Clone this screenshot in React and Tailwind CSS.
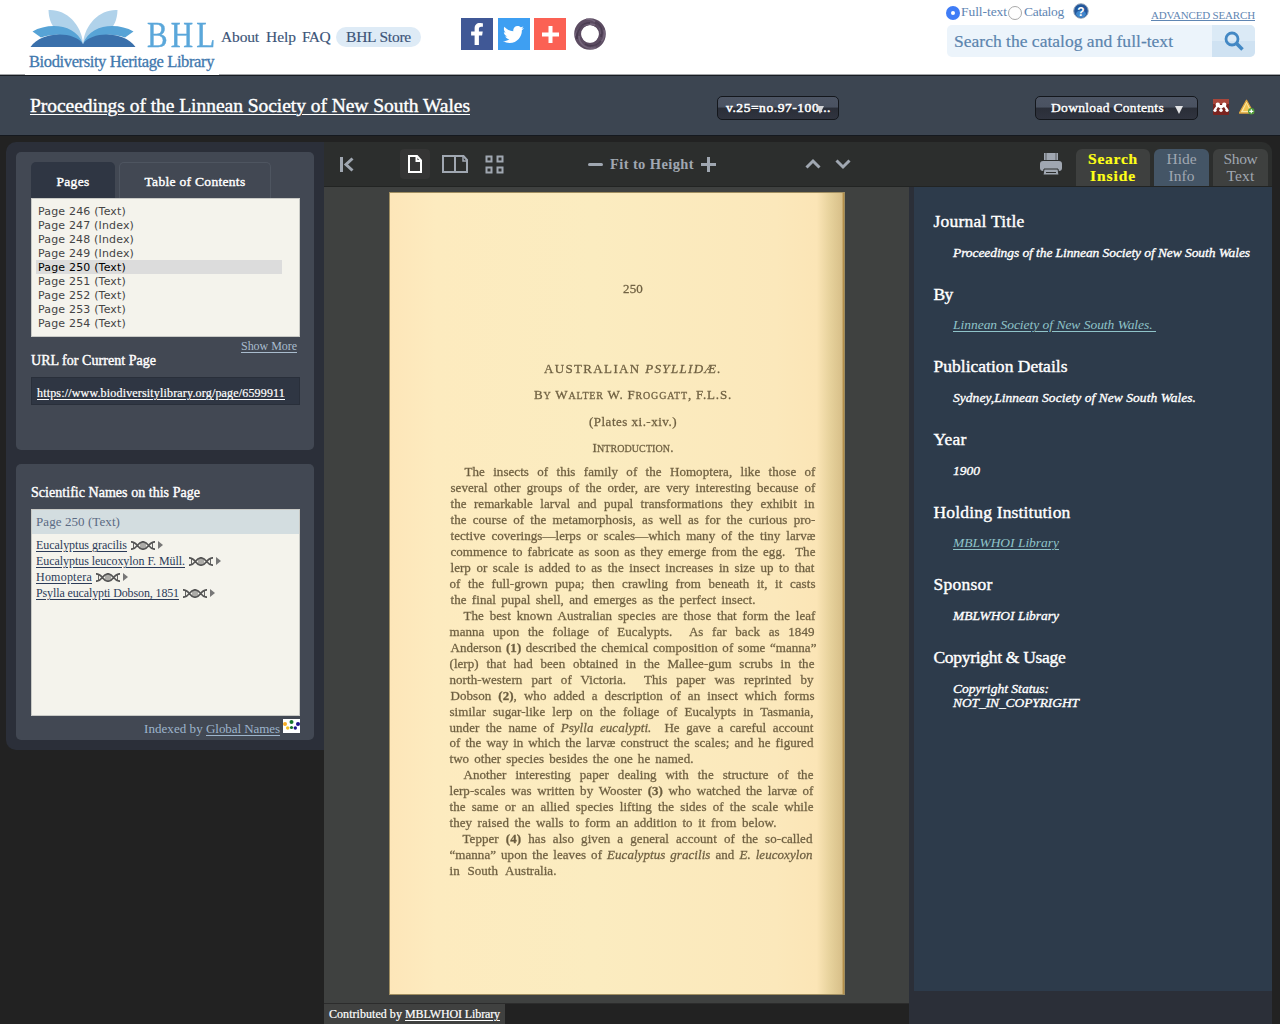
import React, { useLayoutEffect, useRef } from "react";
import { FaFacebookF, FaTwitter } from "react-icons/fa";

/* Single-line text tracked out (or in) so that it spans exactly w pixels. */
function T({ w, words = false, className = "", children }) {
  const ref = useRef(null);
  useLayoutEffect(() => {
    const el = ref.current;
    el.style.letterSpacing = words ? "0.05px" : "0px";
    el.style.wordSpacing = "0px";
    const natural = el.getBoundingClientRect().width;
    const text = el.textContent;
    if (words) {
      el.style.wordSpacing = (w - natural) / Math.max(1, text.split(/[ \u00a0]/).length - 1) + "px";
    } else {
      el.style.letterSpacing = (w - natural) / text.length + "px";
    }
  }, [w, words]);
  return (
    <span ref={ref} className={"inline-block whitespace-pre " + className}>
      {children}
    </span>
  );
}

function Logo() {
  return (
    <div className="z-10 ml-[25px] h-[75px] w-[194px] shrink-0 bg-white pt-[9px]">
      <div className="flex h-[40px] pl-[5px]">
        <svg width="108" height="38" viewBox="0 0 108 38" className="shrink-0">
          <path d="M18.500 1C36 0 51 15 53 34 31 29 19 20 18.500 1z" fill="#b0d2ea" />
          <path d="M87.500 1C70 0 55 15 53 34c22-5 34-14 34.500-33z" fill="#b0d2ea" />
          <path d="M2.500 22.500c16-9 43-8 50.500 12.500C41 26 27 23 11 28.500z" fill="#57a3d6" />
          <path d="M103.500 22.500c-16-9-43-8-50.500 12.500 12-9 26-12 42-6.500z" fill="#57a3d6" />
          <path d="M.5 38c11-16 44-16 52.500-3 8.500-13 41.500-13 52.500 3z" fill="#3a70ab" />
        </svg>
        <div className="ml-[9px] mt-[8px] h-[32px] w-[69px] text-[36px] leading-[36px] text-[#5aa7da]">
          <span className="inline-block origin-left scale-x-[0.86] [-webkit-text-stroke:0.4px_#5aa7da]">
            <T w={73}>BHL</T>
          </span>
        </div>
      </div>
      <div className="ml-[4px] mt-[3px] h-5 text-[16.5px] leading-5 text-[#3f78ae] [-webkit-text-stroke:0.3px_#3f78ae]">
        <T w={185}>Biodiversity Heritage Library</T>
      </div>
    </div>
  );
}

function RingIcon() {
  return (
    <svg width="32" height="32" viewBox="0 0 32 32">
      <circle cx="16" cy="16" r="12.3" fill="none" stroke="#5c4c62" strokeWidth="7" />
      <g fill="none" stroke="#897b90" strokeWidth="1.5" opacity=".55">
        <path d="M1 18C4 8 12 4 21 7" />
        <path d="M12 1c10 0 15 7 15 15" />
        <path d="M30 12c2 10-5 16-13 17" />
        <path d="M22 30C12 32 5 26 5 18" />
      </g>
      <g fill="none" stroke="#3d3045" strokeWidth="2" opacity=".6">
        <path d="M3 21C2 12 8 5 16 5" />
        <path d="M21 4c6 3 8 9 6 15" />
        <path d="M27 23c-4 6-11 6-16 3" />
      </g>
      <circle cx="16" cy="16" r="8.6" fill="#fff" />
    </svg>
  );
}

function Header() {
  return (
    <header className="flex h-[76px] border-b border-[#171c22] bg-[linear-gradient(#fff_74px,#a3a5a8_74px)]">
      <Logo />
      <nav className="ml-[2px] mt-[27px] flex h-5 w-[240px] items-center text-[15.5px] leading-5 text-[#3c5478] [-webkit-text-stroke:0.15px_#3c5478]">
        <T w={38}>About</T>
        <T w={30} className="ml-[7px]">Help</T>
        <T w={28} className="ml-[6px]">FAQ</T>
        <span className="ml-[6px] flex h-[20px] w-[85px] items-center justify-center rounded-full bg-[#deebf6]">
          <T w={65}>BHL Store</T>
        </span>
      </nav>
      <div className="mt-[18px] flex gap-[4.5px]">
        <span className="flex h-8 w-8 items-end justify-center bg-[#405896] text-white">
          <FaFacebookF size={22} className="mb-[5px]" />
        </span>
        <span className="flex h-8 w-8 items-center justify-center bg-[#3e9ff2] text-white">
          <FaTwitter size={21} />
        </span>
        <span className="flex h-8 w-8 items-center justify-center bg-[#fb6154]">
          <svg width="17" height="17" viewBox="0 0 17 17" stroke="#fff" strokeWidth="4">
            <path d="M8.500 0v17M0 8.500h17" />
          </svg>
        </span>
        <span className="ml-[3px]">
          <RingIcon />
        </span>
      </div>
      <div className="ml-auto mr-[25px] w-[309px]">
        <div className="flex h-[25px] items-start text-[13.5px] leading-[16px] text-[#5f86b3]">
          <span className="mt-[6px] flex h-[14px] w-[14px] items-center justify-center rounded-full bg-[#3f7cf6]">
            <i className="h-[4px] w-[4px] rounded-full bg-white" />
          </span>
          <T w={46} className="ml-px mt-[4px]">Full-text</T>
          <span className="ml-px mt-[6px] h-[14px] w-[14px] rounded-full border border-[#a9a9a9] bg-white" />
          <T w={40} className="ml-[2px] mt-[4px]">Catalog</T>
          <svg width="16" height="16" viewBox="0 0 16 16" className="ml-[9px] mt-[3px]">
            <circle cx="8" cy="8" r="7.300" fill="#22579c" stroke="#9aa9bb" strokeWidth="1" />
            <ellipse cx="8" cy="11" rx="5" ry="3.500" fill="#3f87cc" />
            <text x="8" y="12.500" textAnchor="middle" fill="#fff" fontSize="12" fontWeight="bold" fontFamily="Liberation Sans, sans-serif">?</text>
          </svg>
          <span className="ml-auto mt-[9px] h-[12px] border-b border-[#5f86b3] text-[11px] leading-[13px]">
            <T w={104}>ADVANCED SEARCH</T>
          </span>
        </div>
        <div className="ml-px flex h-8 w-[308px] overflow-hidden rounded-[5px] bg-[#ecf4fb]">
          <div className="flex-1 pl-[7px] text-[17.5px] leading-[33px] text-[#5b84ae] [-webkit-text-stroke:0.2px_#5b84ae]">
            <T w={219}>Search the catalog and full-text</T>
          </div>
          <div className="flex w-[43px] items-center justify-center bg-[linear-gradient(#dbeaf6_50%,#cfe2f2_50%)]">
            <svg width="20" height="20" viewBox="0 0 20 20" fill="none" stroke="#4388c4" className="ml-px">
              <circle cx="8" cy="8" r="6" strokeWidth="2.800" />
              <path d="M12.300 12.300L18.500 18.500" strokeWidth="3.600" />
            </svg>
          </div>
        </div>
      </div>
    </header>
  );
}

function TitleBar() {
  return (
    <div className="flex h-[60px] items-start border-b border-[#15191f] bg-[#3c4551] text-white">
      <div className="ml-[30px] mt-[19px] h-[21px] w-[440px] text-[19.5px] leading-[22px] [-webkit-text-stroke:0.4px_#fff]">
        <T w={440} className="underline decoration-1 underline-offset-2">Proceedings of the Linnean Society of New South Wales</T>
      </div>
      <button className="relative ml-[247px] mt-[20px] h-[24px] w-[122px] rounded-[5px] border border-[#14171c] bg-[linear-gradient(#4d5564_0,#4a5261_46%,#2a2e38_50%,#30343f_100%)] pl-[8px] text-left text-[13.5px] leading-[20px] [-webkit-text-stroke:0.5px_#fff]">
        <T w={105}>v.25=no.97-100...</T>
        <svg width="8" height="8" viewBox="0 0 8 8" className="absolute left-[98px] top-[9px]">
          <path d="M0 0h8L4 8z" fill="#d5d6d8" />
        </svg>
      </button>
      <button className="ml-[196px] mt-[20px] flex h-[24px] w-[163px] items-center rounded-[5px] border border-[#14171c] bg-[linear-gradient(#4d5564_0,#4a5261_46%,#2a2e38_50%,#30343f_100%)] pl-[15px] text-[13.5px] leading-[22px] [-webkit-text-stroke:0.4px_#fff]">
        <T w={113}>Download Contents</T>
        <svg width="8" height="8" viewBox="0 0 8 8" className="ml-[11px] mt-[3px]">
          <path d="M0 0h8L4 8z" fill="#e3e4e6" />
        </svg>
      </button>
      <svg width="16" height="16" viewBox="0 0 16 16" className="ml-[15px] mt-[23px]">
        <rect width="16" height="16" rx="1" fill="#7b2420" />
        <path d="M0 0h16v5H0z" fill="#a8463b" />
        <g fill="#fff">
          <circle cx="4.800" cy="5.800" r="2.200" />
          <circle cx="11.200" cy="5.800" r="2.200" />
          <circle cx="2" cy="11.300" r="1.600" />
          <circle cx="8" cy="11.300" r="1.700" />
          <circle cx="14" cy="11.300" r="1.600" />
          <path d="M1 10l3-4h8l3 4-2 1-2-3-3 2-3-2-2 3z" />
        </g>
      </svg>
      <svg width="16" height="16" viewBox="0 0 16 16" className="ml-[10px] mt-[23px]">
        <path d="M7.500 1.200L14.500 14h-14z" fill="#fae9a6" stroke="#e0a53c" strokeWidth="1.300" strokeLinejoin="round" />
        <path d="M7.500 4l3.500 8H4z" fill="#f1c453" />
        <circle cx="12.300" cy="12.300" r="3.200" fill="#4c9a38" />
        <path d="M12.300 10.300v4M10.300 12.300h4" stroke="#fff" strokeWidth="1.200" />
      </svg>
    </div>
  );
}

const pages = [
  ["246", "Text", 88], ["247", "Index", 96], ["248", "Index", 96], ["249", "Index", 96], ["250", "Text", 88],
  ["251", "Text", 88], ["252", "Text", 88], ["253", "Text", 88], ["254", "Text", 88],
];

const names = [
  ["Eucalyptus gracilis", 91],
  ["Eucalyptus leucoxylon F. Müll.", 149],
  ["Homoptera", 56],
  ["Psylla eucalypti Dobson, 1851", 143],
];

function Dna() {
  return (
    <svg width="24" height="9" viewBox="0 0 24 9" fill="none" stroke="#555" className="ml-[4px]">
      <path d="M0 .8C7 .8 6 8.200 12 8.200S17 .8 24 .8M0 8.200C7 8.200 6 .8 12 .8s5 7.400 12 7.400" strokeWidth="1.700" />
      <path d="M2.500 1.500v6M10 1.500v6M12 1.500v6M14 1.500v6M21.500 1.500v6" strokeWidth=".9" />
    </svg>
  );
}

function Sidebar() {
  return (
    <aside className="h-[608px] w-[318px] rounded-l-[10px] bg-[#2b2f39] px-[10px] pt-[10px]">
      <section className="h-[298px] w-[298px] rounded-[5px] bg-[#424853] px-[15px] pt-[10px]">
        <div className="flex h-9 text-[13.5px] leading-[39px] text-white [-webkit-text-stroke:0.4px_#fff]">
          <div className="w-[84px] rounded-t-[5px] bg-[#2f3643] text-center">
            <T w={33}>Pages</T>
          </div>
          <div className="ml-[4px] w-[152px] rounded-t-[5px] border border-b-0 border-[#4e5560] text-center leading-[37px]">
            <T w={101}>Table of Contents</T>
          </div>
        </div>
        <ul className="h-[139px] w-[269px] border border-[#c9cac6] bg-[#f4f3ec] pl-[4px] pt-[5px] font-['DejaVu_Sans',sans-serif] text-[11px] leading-[15px] text-[#444]">
          {pages.map(([n, kind, w]) => (
            <li key={n} className={n === "250" ? "h-[14px] w-[246px] bg-[#dcdcdc] pl-[2px] text-black" : "h-[14px] pl-[2px]"}>
              <T w={w}>{`Page ${n} (${kind})`}</T>
            </li>
          ))}
        </ul>
        <div className="mr-[2px] mt-[2px] h-[14px] text-right text-[12px] leading-[14px] text-[#a9bccd]">
          <T w={56} className="underline underline-offset-2">Show More</T>
        </div>
        <div className="h-[16px] text-[14px] leading-[16px] text-white [-webkit-text-stroke:0.4px_#fff]">
          <T w={125}>URL for Current Page</T>
        </div>
        <div className="mt-[8px] h-[28px] w-[269px] border border-[#292f3a] bg-[#2f3643] pl-[5px] text-[12px] leading-[30px] text-white [-webkit-text-stroke:0.2px_#fff]">
          <T w={248} className="underline underline-offset-2">https://www.biodiversitylibrary.org/page/6599911</T>
        </div>
      </section>
      <section className="mt-[14px] h-[276px] w-[298px] rounded-[5px] bg-[#424853] px-[15px] pt-[20px]">
        <div className="h-[25px] text-[14px] leading-[17px] text-white [-webkit-text-stroke:0.4px_#fff]">
          <T w={169}>Scientific Names on this Page</T>
        </div>
        <div className="h-[207px] w-[269px] border border-[#c9cac6] bg-[#f4f3ec] text-[12px] text-[#2b3b58]">
          <div className="mb-[3px] h-[24px] bg-[#d3dde0] pl-[4px] text-[13px] leading-[24px] text-[#5b6a83]">
            <T w={84}>Page 250 (Text)</T>
          </div>
          {names.map(([n, w]) => (
            <div key={n} className="flex h-[16px] items-center pl-[4px] leading-[16px]">
              <T w={w} className="underline underline-offset-2">{n}</T>
              <Dna />
              <svg width="5" height="8" viewBox="0 0 5 8" className="ml-[3px]">
                <path d="M0 0l5 4-5 4z" fill="#777" />
              </svg>
            </div>
          ))}
        </div>
        <div className="flex h-[24px] w-[269px] justify-end text-[13px] leading-[26px] text-[#9db4cb]">
          <T w={62}>{"Indexed by "}</T>
          <T w={74} className="underline underline-offset-2">Global Names</T>
          <svg width="17" height="14" viewBox="0 0 17 14" className="ml-[3px] mt-[3px]">
            <path d="M0 0h17v14H0z" fill="#fff" />
            <circle cx="2" cy="5" r="2" fill="#f6ac25" />
            <circle cx="4.700" cy="9" r="1.700" fill="#f6c225" />
            <circle cx="8.500" cy="3" r="2" fill="#19742c" />
            <circle cx="8.500" cy="8.500" r="1.600" fill="#19742c" />
            <circle cx="15" cy="5" r="2" fill="#20148a" />
            <circle cx="12.300" cy="9" r="1.700" fill="#20148a" />
          </svg>
        </div>
      </section>
    </aside>
  );
}

function Toolbar() {
  return (
    <div className="flex h-[45px] items-start rounded-tr-[10px] border-b border-[#222423] bg-[#2c2e2d] text-[#a0a7b1]">
      <svg width="14" height="16" viewBox="0 0 14 16" fill="none" stroke="currentColor" strokeWidth="3" className="ml-[16px] mt-[15px]">
        <path d="M1.500 0v15M12.500 1.500L6 7.500l6.500 6" />
      </svg>
      <span className="ml-[46px] mt-[7px] flex h-[30px] w-[30px] items-center justify-center rounded-[4px] bg-[#353535]">
        <svg width="14" height="18" viewBox="0 0 14 18" fill="none" stroke="#fff" strokeWidth="2">
          <path d="M1 1h8l4 4.500V17H1z" />
          <path d="M8.500 1v5H13" />
        </svg>
      </span>
      <svg width="26" height="18" viewBox="0 0 26 18" fill="none" stroke="currentColor" strokeWidth="2" className="ml-[12px] mt-[13px]">
        <path d="M1 1h20.500L25 5v12H1zM13 1v16" />
        <path d="M21 1v5h4" strokeWidth="1.500" />
      </svg>
      <svg width="19" height="19" viewBox="0 0 19 19" fill="none" stroke="currentColor" strokeWidth="2" className="ml-[17px] mt-[13px]">
        <path d="M1.500 1.500h5v5h-5zM12.500 1.500h5v5h-5zM1.500 12.500h5v5h-5zM12.500 12.500h5v5h-5z" />
      </svg>
      <i className="ml-[84px] mt-[21px] h-[3px] w-[15px] rounded-full bg-[#a0a7b1]" />
      <span className="ml-[7px] mt-[13px] text-[14.5px] font-bold leading-[18px]">
        <T w={84}>Fit to Height</T>
      </span>
      <svg width="15" height="15" viewBox="0 0 15 15" fill="none" stroke="currentColor" strokeWidth="3" className="ml-[7px] mt-[15px]">
        <path d="M7.500 0v15M0 7.500h15" />
      </svg>
      <svg width="16" height="11" viewBox="0 0 16 11" fill="none" stroke="currentColor" strokeWidth="3" className="ml-[89px] mt-[16px]">
        <path d="M1.500 9.500L8 3l6.500 6.500" />
      </svg>
      <svg width="16" height="11" viewBox="0 0 16 11" fill="none" stroke="currentColor" strokeWidth="3" className="ml-[14px] mt-[17px]">
        <path d="M1.500 1.500L8 8l6.500-6.500" />
      </svg>
      <svg width="22" height="23" viewBox="0 0 22 23" className="ml-auto mt-[11px]" fill="currentColor">
        <path d="M4 0h14v7H4z" />
        <path d="M6 0v8M16 0v8" stroke="#2c2e2d" strokeWidth=".6" />
        <rect y="8" width="22" height="10" rx="3" />
        <path d="M4 16h14l1 6H3z" stroke="#2c2e2d" />
        <path d="M6 19.500h10" stroke="#2c2e2d" />
      </svg>
      <div className="ml-[14px] mr-[4px] mt-[7px] flex gap-[4px] text-center text-[15.5px] leading-[17px]">
        <span className="flex h-[37px] w-[74px] flex-col items-center rounded-t-[6px] bg-[#3e403f] pt-px font-bold text-[#ffff17] [-webkit-text-stroke:0.2px_#ffff17]">
          <T w={50}>Search</T>
          <T w={46}>Inside</T>
        </span>
        <span className="flex h-[37px] w-[55px] flex-col items-center rounded-t-[6px] bg-[#445566] pt-px">
          <T w={30}>Hide</T>
          <T w={26}>Info</T>
        </span>
        <span className="flex h-[37px] w-[55px] flex-col items-center rounded-t-[6px] bg-[#3e403f] pt-px">
          <T w={34}>Show</T>
          <T w={28}>Text</T>
        </span>
      </div>
    </div>
  );
}

/* Each printed line: indent, width, text. */
const lines = [
  [15, 351, "The insects of this family of the Homoptera, like those of"],
  [1, 365, "several other groups of the order, are very interesting because of"],
  [1, 364, "the remarkable larval and pupal transformations they exhibit in"],
  [1, 365, "the course of the metamorphosis, as well as for the curious pro-"],
  [1, 365, "tective coverings—lerps or scales—which many of the tiny larvæ"],
  [1, 365, "commence to fabricate as soon as they emerge from the egg.\u00a0 The"],
  [1, 364, "lerp or scale is added to as the insect increases in size up to that"],
  [0, 366, "of the full-grown pupa; then crawling from beneath it, it casts"],
  [1, 305, "the final pupal shell, and emerges as the perfect insect."],
  [14, 352, "The best known Australian species are those that form the leaf"],
  [0, 365, "manna upon the foliage of Eucalypts.\u00a0 As far back as 1849"],
  [1, 366, <>Anderson <b>(1)</b> described the chemical composition of some “manna”</>],
  [0, 365, "(lerp) that had been obtained in the Mallee-gum scrubs in the"],
  [0, 364, "north-western part of Victoria.\u00a0 This paper was reprinted by"],
  [1, 364, <>Dobson <b>(2)</b>, who added a description of an insect which forms</>],
  [0, 364, "similar sugar-like lerp on the foliage of Eucalypts in Tasmania,"],
  [0, 364, <>under the name of <i>Psylla eucalypti.</i>{"\u00a0"} He gave a careful account</>],
  [0, 364, "of the way in which the larvæ construct the scales; and he figured"],
  [0, 244, "two other species besides the one he named."],
  [14, 350, "Another interesting paper dealing with the structure of the"],
  [0, 364, <>lerp-scales was written by Wooster <b>(3)</b> who watched the larvæ of</>],
  [0, 364, "the same or an allied species lifting the sides of the scale while"],
  [0, 327, "they raised the walls to form an addition to it from below."],
  [13, 350, <>Tepper <b>(4)</b> has also given a general account of the so-called</>],
  [0, 363, <>“manna” upon the leaves of <i>Eucalyptus gracilis</i> and <i>E. leucoxylon</i></>],
  [0, 107, "in South Australia."],
];

function BookPage() {
  return (
    <div className="ml-[65px] mt-[5px] h-[803px] w-[456px] border border-[#a08e61] bg-[linear-gradient(90deg,#fde6b9_0,#fdebbf_10%,#fbecc0_45%,#fbe8bb_85%,#fbe5b6_94%,#e6d19b_97%,#d8c08a_99.5%,#a87f38_100%)] text-[#695b3d]">
      <div className="flex flex-col items-center pr-[1px] pt-[88px] leading-[16px] blur-[0.4px] [-webkit-text-stroke:0.3px_#7a6b4b]">
        <div className="mr-[-33px] flex flex-col items-center">
          <T w={20} className="text-[13px]">250</T>
          <T w={178} className="mt-[64px] text-[13px]">AUSTRALIAN <i>PSYLLIDÆ.</i></T>
          <T w={198} className="mt-[10px] text-[13px]">B<span className="text-[10px]">Y</span> W<span className="text-[10px]">ALTER</span> W. F<span className="text-[10px]">ROGGATT</span>, F.L.S.</T>
          <T w={88} className="mt-[10px] text-[13px]">(Plates xi.-xiv.)</T>
          <T w={81} className="mt-[10px] text-[13px]">I<span className="text-[10px]">NTRODUCTION</span>.</T>
        </div>
        <div className="mt-[7px] w-full pl-[59.5px] text-[13px]">
          {lines.map(([indent, w, text], k) => (
            <div key={k} className="h-[15.98px]" style={{ paddingLeft: indent }}>
              <T w={w} words>{text}</T>
            </div>
          ))}
        </div>
      </div>
    </div>
  );
}

const info = [
  ["Journal Title", 91, "Proceedings of the Linnean Society of New South Wales", 297],
  ["By", 19, "Linnean Society of New South Wales. ", 203, true],
  ["Publication Details", 134, "Sydney,Linnean Society of New South Wales.", 243],
  ["Year", 33, "1900", 27],
  ["Holding Institution", 137, "MBLWHOI Library", 106, true],
  ["Sponsor", 59, "MBLWHOI Library", 106],
  ["Copyright & Usage", 132, "Copyright Status:", 96],
];

function InfoPanel() {
  return (
    <div className="h-[837px] w-[363px] bg-[#2b2f38] pl-[5px]">
      <dl className="h-[804px] bg-[#2d3b4b] pl-[19.5px] pt-[25px] text-white">
        {info.map(([h, hw, d, dw, link]) => (
          <div key={h} className="h-[72.7px]">
            <dt className="h-[20px] text-[17.5px] leading-[19px] [-webkit-text-stroke:0.4px_#fff]">
              <T w={hw}>{h}</T>
            </dt>
            <dd className="ml-[19.5px] mt-[13.5px] text-[13.5px] italic leading-[14px]">
              {link ? (
                <T w={dw} className="text-[#8fc3c9] underline underline-offset-2">{d}</T>
              ) : (
                <T w={dw} className="[-webkit-text-stroke:0.35px_#fff]">{d}</T>
              )}
              {h === "Copyright & Usage" && (
                <div className="[-webkit-text-stroke:0.35px_#fff]">
                  <T w={126}>NOT_IN_COPYRIGHT</T>
                </div>
              )}
            </dd>
          </div>
        ))}
      </dl>
    </div>
  );
}

export default function App() {
  return (
    <div className="h-[1024px] w-[1280px] overflow-hidden bg-[#222] font-['Liberation_Serif',serif]">
      <Header />
      <TitleBar />
      <main className="ml-[6px] mt-[6px] flex w-[1266px]">
        <Sidebar />
        <div className="w-[948px]">
          <Toolbar />
          <div className="flex">
            <div className="w-[585px]">
              <div className="flex h-[817px] border-b border-[#2c2c2c] bg-[#3f4140]">
                <BookPage />
              </div>
              <div className="h-[20px] w-[181px] bg-[#404140] pl-[5px] text-[12px] leading-[20px] text-white [-webkit-text-stroke:0.2px_#fff]">
                <T w={76}>{"Contributed by "}</T>
                <T w={95} className="underline underline-offset-2">MBLWHOI Library</T>
              </div>
            </div>
            <InfoPanel />
          </div>
        </div>
      </main>
    </div>
  );
}
